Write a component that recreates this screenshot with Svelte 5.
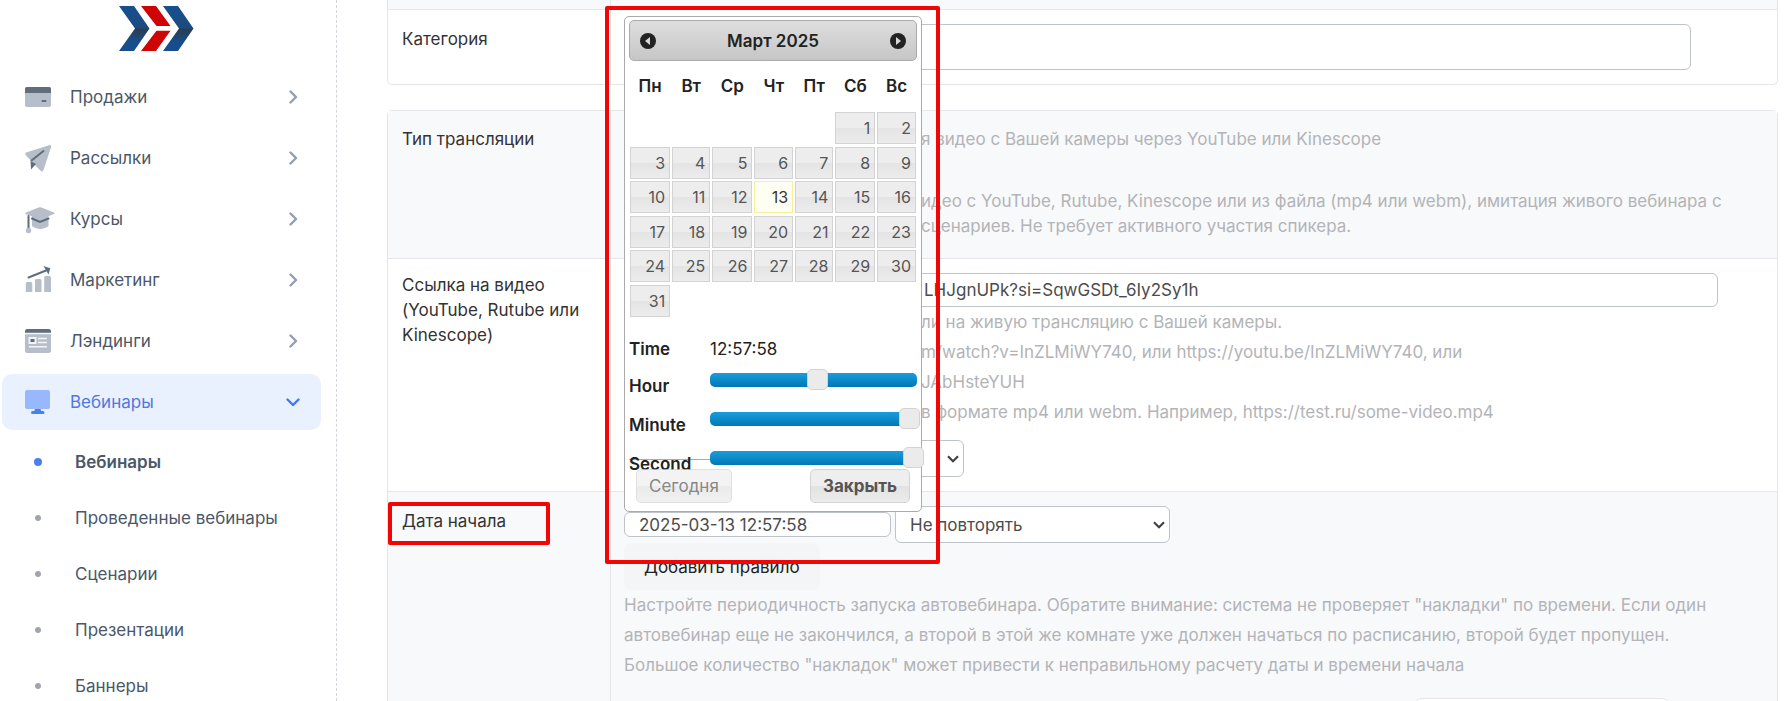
<script>
    let menu = [
        { id: 'sales', title: 'Продажи' },
        { id: 'mail', title: 'Рассылки' },
        { id: 'courses', title: 'Курсы' },
        { id: 'marketing', title: 'Маркетинг' },
        { id: 'landing', title: 'Лэндинги' },
        { id: 'webinars', title: 'Вебинары' }
    ]
    let active = 'webinars'

    let submenu = ['Вебинары', 'Проведенные вебинары', 'Сценарии', 'Презентации', 'Баннеры']
    let activeSub = 'Вебинары'

    const weekdays = ['Пн', 'Вт', 'Ср', 'Чт', 'Пт', 'Сб', 'Вс']
    const today = 13

    // March 2025 starts on saturday
    const weeks = [0, 1, 2, 3, 4, 5].map(w =>
        weekdays.map((_, d) => {
            const day = w * 7 + d - 4
            return day > 0 && day < 32 ? day : null
        })
    )

    let hour = 12
    let minute = 57
    let second = 58

    const pad = (n) => String(n).padStart(2, '0')

    $: time = `${pad(hour)}:${pad(minute)}:${pad(second)}`
    $: startDate = `2025-03-13 ${time}`

    let category = ''
    let link = 'LHJgnUPk?si=SqwGSDt_6Iy2Sy1h'
</script>

<div class="layout">
    <aside class="sidebar">
        <a class="logo" href="#home" aria-label="Главная">
            <svg width="75" height="45" viewBox="0 0 75 45">
                <defs>
                    <linearGradient id="blue" x1="0" y1="0" x2="0" y2="1">
                        <stop offset="0" stop-color="#17508f" />
                        <stop offset=".48" stop-color="#1c4a80" />
                        <stop offset=".52" stop-color="#2b3d52" />
                        <stop offset=".8" stop-color="#174d8c" />
                    </linearGradient>
                </defs>
                <path fill="url(#blue)" d="M0 0h15l15.500 22.500L15 45H0l16-22.500z" />
                <path fill="#cf0404" d="M22 0h15l14.500 20H37.500zM37.500 24.700h14L37 45H22z" />
                <path fill="url(#blue)" d="M44 0h15l15.500 22.500L59 45H44l16-22.500z" />
            </svg>
        </a>

        <nav>
            {#each menu as item}
                <a class="item" class:active={item.id === active} href="#{item.id}">
                    <svg class="icon" width="30" height="30" viewBox="0 0 30 30">
                        {#if item.id === 'sales'}
                            <rect class="light" y="5" width="26" height="20" rx="2" />
                            <path class="dark" d="M2 5h22a2 2 0 0 1 2 2v4H0V7a2 2 0 0 1 2-2z" />
                            <rect class="dark" x="16.500" y="18" width="5" height="2" rx="1" />
                        {:else if item.id === 'mail'}
                            <path class="light" d="M1 9.500L24 2.200q2.500-.5 2 2L18.500 27q-1 2.500-3.200.5L1 12.500q-1.500-1.800 0-3z" />
                            <path class="dark" d="M5.500 18l5.500 3-5 5.500z" />
                            <path class="line" d="M6.500 17.500L18.500 8" />
                        {:else if item.id === 'courses'}
                            <path class="light" d="M7 12h16.500v10q-8 6.500-16.500 0z" />
                            <path class="light" d="M15 3l14 5.500q1.500.8 0 1.600L15 15.500 1 10.200q-1.500-.8 0-1.600z" />
                            <path class="line" d="M7 14.500l8 3.500 8.500-3.500M3.500 12v12" />
                            <circle class="light" cx="3.500" cy="26.500" r="2.700" />
                        {:else if item.id === 'marketing'}
                            <path class="light" d="M.8 27V18.500a1.500 1.500 0 0 1 1.500-1.500h3.500a1.500 1.500 0 0 1 1.500 1.500V27zM10 27V15.500a1.500 1.500 0 0 1 1.500-1.500H15a1.500 1.500 0 0 1 1.500 1.500V27zM19.200 27V12.500a1.500 1.500 0 0 1 1.500-1.500h3.800a1.500 1.500 0 0 1 1.500 1.500V27z" />
                            <path class="line" d="M3.500 12.500L21 5.500" />
                            <path class="dark" d="M18.500 1l6.800 2.200-1.800 6.300z" />
                        {:else if item.id === 'landing'}
                            <rect class="light" y="3" width="26" height="24" rx="2.500" />
                            <path class="dark" d="M2.500 3h21A2.500 2.500 0 0 1 26 5.500V7H0V5.500A2.500 2.500 0 0 1 2.500 3z" />
                            <path class="cut" d="M0 7.500h26M13 12.500h9M13 16.500h9M4 20.800h18" />
                            <rect class="cutbox" x="3.500" y="11" width="8" height="7" />
                            <rect class="dark" x="5.500" y="13" width="4" height="3" />
                        {:else}
                            <rect class="light" y="3" width="25" height="19" rx="2" />
                            <path class="dark" d="M10 22h5.500l.8 2h1.700q1.500 0 1.500 1.500T18 27H7.500Q6 27 6 25.500T7.500 24h1.800z" />
                        {/if}
                    </svg>
                    <span class="title">{item.title}</span>
                    <svg class="arrow" width="14" height="14" viewBox="0 0 14 14">
                        {#if item.id === active}
                            <path d="M1.500 4.500L7 10l5.500-5.500" />
                        {:else}
                            <path d="M4.500 1.500L10 7l-5.500 5.500" />
                        {/if}
                    </svg>
                </a>
            {/each}

            <ul class="submenu">
                {#each submenu as title}
                    <li>
                        <a class="subitem" class:current={title === activeSub} href="#webinars">
                            <span class="bullet"></span>
                            {title}
                        </a>
                    </li>
                {/each}
            </ul>
        </nav>
    </aside>

    <main>
        <section class="panel first">
            <div class="row odd">
                <div class="name"></div>
                <div class="value"></div>
            </div>
            <div class="row">
                <label class="name" for="category">Категория</label>
                <div class="value">
                    <input id="category" class="field category" type="text" bind:value={category}>
                </div>
            </div>
        </section>

        <section class="panel">
            <div class="row odd type">
                <div class="name">Тип трансляции</div>
                <div class="value hint behind">
                    <p>я видео с Вашей камеры через YouTube или Kinescope</p>
                    <p>идео с YouTube, Rutube, Kinescope или из файла (mp4 или webm), имитация живого вебинара с<br>сценариев. Не требует активного участия спикера.</p>
                </div>
            </div>

            <div class="row">
                <label class="name multi" for="link">Ссылка на видео (YouTube, Rutube или Kinescope)</label>
                <div class="value">
                    <input id="link" class="field link" type="text" bind:value={link}>
                    <p class="hint wide shifted">
                        ли на живую трансляцию с Вашей камеры.<br>
                        m/watch?v=InZLMiWY740, или https://youtu.be/InZLMiWY740, или<br>
                        JAbHsteYUH<br>
                        в формате mp4 или webm. Например, https://test.ru/some-video.mp4
                    </p>
                    <select class="field source" aria-label="Источник видео"><option></option></select>
                </div>
            </div>

            <div class="row odd">
                <label class="name" for="start">
                    Дата начала
                    <span class="mark mark-label"></span>
                </label>
                <div class="value">
                    <div class="schedule">
                        <div class="date">
                            <input id="start" class="field" type="text" value={startDate}>

                            <div class="picker">
                                <div class="picker-header">
                                    <button type="button" aria-label="Предыдущий месяц">
                                        <svg width="16" height="16" viewBox="0 0 16 16"><circle cx="8" cy="8" r="8" /><path d="M10 4v8L5 8z" /></svg>
                                    </button>
                                    <span>Март 2025</span>
                                    <button type="button" aria-label="Следующий месяц">
                                        <svg width="16" height="16" viewBox="0 0 16 16"><circle cx="8" cy="8" r="8" /><path d="M6 4v8l5-4z" /></svg>
                                    </button>
                                </div>

                                <table>
                                    <thead>
                                        <tr>
                                            {#each weekdays as name}
                                                <th>{name}</th>
                                            {/each}
                                        </tr>
                                    </thead>
                                    <tbody>
                                        {#each weeks as week}
                                            <tr>
                                                {#each week as day}
                                                    <td>
                                                        {#if day}
                                                            <a class:today={day === today} href="#day{day}">{day}</a>
                                                        {/if}
                                                    </td>
                                                {/each}
                                            </tr>
                                        {/each}
                                    </tbody>
                                </table>

                                <div class="time">
                                    <b>Time</b>
                                    <output>{time}</output>
                                    <label for="hour">Hour</label>
                                    <div class="slider"><input id="hour" type="range" min="0" max="23" bind:value={hour}></div>
                                    <label for="minute">Minute</label>
                                    <div class="slider"><input id="minute" type="range" min="0" max="59" bind:value={minute}></div>
                                    <label for="second">Second</label>
                                    <div class="slider"><input id="second" type="range" min="0" max="59" bind:value={second}></div>
                                </div>

                                <div class="picker-buttons">
                                    <button class="now" type="button">Сегодня</button>
                                    <button class="close" type="button">Закрыть</button>
                                </div>
                            </div>
                            <span class="mark mark-picker"></span>
                        </div>

                        <select class="field repeat" aria-label="Повтор">
                            <option>Не повторять</option>
                        </select>
                    </div>

                    <button class="add" type="button">Добавить правило</button>

                    <p class="hint wide">
                        Настройте периодичность запуска автовебинара. Обратите внимание: система не проверяет "накладки" по времени. Если один автовебинар еще не закончился, а второй в этой же комнате уже должен начаться по расписанию, второй будет пропущен. Большое количество "накладок" может привести к неправильному расчету даты и времени начала
                    </p>
                    <div class="next"></div>
                </div>
            </div>
        </section>
    </main>
</div>

<style>
    :global(body) {
        background: #fff;
        font-family: Inter, "Liberation Sans", sans-serif;
        font-size: 17px;
        color: #333;
    }

    .layout, .layout * {
        box-sizing: border-box;
    }

    .layout {
        display: flex;
        height: 100vh;
        overflow: hidden;
    }

    a {
        text-decoration: none;
        color: inherit;
    }

    p {
        margin: 0;
    }

    button, input, select {
        font-family: inherit;
        font-size: inherit;
    }

    /* SIDEBAR */

    .sidebar {
        flex: 0 0 337px;
        padding: 6px 15px 0 2px;
        border-right: 1px dashed #d3d5dc;
        color: #4b5768;
    }

    .logo {
        display: flex;
        justify-content: center;
        margin: 0 10px 18px 0;
    }

    .item {
        display: flex;
        align-items: center;
        gap: 15px;
        height: 56px;
        margin-bottom: 5px;
        padding: 0 21px 0 23px;
        border-radius: 10px;
    }

    .item.active {
        margin-bottom: 4px;
        background: #eaf1fe;
        color: #5077e3;
    }

    .title {
        flex: 1;
    }

    .light {
        fill: #b6bfc9;
    }

    .dark {
        fill: #5f6d7d;
    }

    .line {
        fill: none;
        stroke: #5f6d7d;
        stroke-width: 2;
        stroke-linecap: round;
    }

    .cut {
        stroke: #f1f3f6;
        stroke-width: 1.5;
    }

    .cutbox {
        fill: #f1f3f6;
    }

    .active .light {
        fill: #97b8fd;
    }

    .active .dark {
        fill: #4c7eee;
    }

    .arrow {
        fill: none;
        stroke: #939db3;
        stroke-width: 2.4;
        stroke-linecap: round;
        stroke-linejoin: round;
    }

    .active .arrow {
        stroke: #4377f2;
    }

    .submenu {
        margin: 0;
        padding: 0;
        list-style: none;
    }

    .subitem {
        display: flex;
        align-items: center;
        gap: 33px;
        height: 56px;
        padding-left: 32px;
    }

    .bullet {
        width: 6px;
        height: 6px;
        margin: 0 1px;
        border-radius: 50%;
        background: #a1a5ad;
    }

    .current {
        font-weight: 600;
    }

    .current .bullet {
        width: 8px;
        height: 8px;
        margin: 0;
        background: #4c7eee;
    }

    /* FORM */

    main {
        flex: 1;
        min-width: 0;
        padding: 0 9px 0 50px;
    }

    .panel {
        margin-bottom: 25px;
        border: 1px solid #e4e6ea;
        border-radius: 5px;
    }

    .first {
        border-top: none;
        border-top-left-radius: 0;
        border-top-right-radius: 0;
    }

    .row {
        display: grid;
        grid-template-columns: 222px 1fr;
        border-top: 1px solid #e4e6ea;
    }

    .row:first-child {
        border-top: none;
    }

    .odd {
        background: #f8f9fb;
    }

    .first .odd {
        height: 9px;
        overflow: hidden;
    }

    .name {
        position: relative;
        padding: 14px;
        line-height: 30px;
    }

    .multi {
        line-height: 25px;
    }

    .value {
        padding: 14px 40px 14px 13px;
        border-left: 1px solid #e4e6ea;
    }

    .hint {
        line-height: 25px;
        color: #b3b4b7;
    }

    .wide {
        line-height: 30px;
    }

    .type .name {
        line-height: 28px;
    }

    .type .value {
        padding: 16px 14px 19px;
    }

    .type .behind {
        padding-left: 310px;
    }

    .type p {
        white-space: nowrap;
    }

    .type p + p {
        margin-top: 37px;
    }

    .shifted {
        padding-left: 297px;
        margin-bottom: 13px;
    }

    .field {
        display: block;
        padding: 0 14px;
        border: 1px solid #bfc3ca;
        border-radius: 6px;
        background: #fff;
        color: #4c4c4c;
    }

    select.field {
        appearance: none;
        height: 37px;
        background: #fff url("data:image/svg+xml,%3Csvg xmlns='http://www.w3.org/2000/svg' width='12' height='8'%3E%3Cpath d='M1 1.200l5 5 5-5' fill='none' stroke='%23444' stroke-width='2.200'/%3E%3C/svg%3E") no-repeat right 4px center;
    }

    .category {
        width: calc(100% - 46px);
        height: 46px;
    }

    .link {
        width: calc(100% - 19px);
        height: 34px;
        padding-left: 299px;
    }

    .source {
        width: 340px;
    }

    .schedule {
        display: flex;
        align-items: center;
        gap: 4px;
    }

    .date {
        position: relative;
    }

    .date .field {
        width: 267px;
        height: 25px;
    }

    .repeat {
        width: 275px;
    }

    .add {
        display: block;
        height: 47px;
        padding: 0 20px;
        border: none;
        border-radius: 8px;
        background: #f4f5f7;
        color: #222;
    }

    .next {
        width: 256px;
        height: 40px;
        margin: 18px 67px 0 auto;
        border: 1px solid #e4e6ea;
        border-radius: 8px;
        background: #fff;
    }

    /* DATE PICKER */

    .picker {
        position: absolute;
        bottom: 100%;
        left: 0;
        z-index: 1;
        width: 298px;
        padding: 3px 4px 0;
        border: 1px solid #aaa;
        border-radius: 5px;
        background: #fff;
        color: #222;
    }

    .picker-header {
        display: flex;
        align-items: center;
        justify-content: space-between;
        height: 41px;
        padding: 0 10px;
        border: 1px solid #aaa;
        border-radius: 5px;
        background: linear-gradient(#dedede, #c6c6c6);
        font-weight: 600;
    }

    .picker-header button {
        display: flex;
        padding: 0;
        border: none;
        background: none;
    }

    .picker-header circle {
        fill: #222;
    }

    .picker-header path {
        fill: #d8d8d8;
    }

    table {
        width: 100%;
        height: 257px;
        border-collapse: collapse;
    }

    th {
        height: 50px;
        padding: 0 5px;
        font-weight: 600;
    }

    td {
        padding: 1px;
    }

    td a {
        display: block;
        height: 32px;
        padding: 0 4px;
        border: 1px solid #d3d3d3;
        background: linear-gradient(#ededed 50%, #e4e4e4 50%, #ececec);
        font-size: 16px;
        line-height: 30px;
        text-align: right;
        color: #555;
    }

    td .today {
        border-color: #f8ef9d;
        background: #fffef2;
        color: #363636;
    }

    .time {
        display: grid;
        grid-template-columns: 81px 1fr;
        grid-template-rows: 30px;
        grid-auto-rows: 39px;
        align-items: center;
        margin-top: 16px;
    }

    .time b, .time label {
        font-weight: 600;
    }

    .time label {
        padding-top: 5px;
    }

    .slider {
        align-self: start;
        height: 14px;
        margin-top: 9px;
        border-radius: 5px;
        background: linear-gradient(#1a9cdc, #0078b6);
    }

    .slider input {
        display: block;
        width: calc(100% + 20px);
        height: 21px;
        margin: -4px -10px;
        appearance: none;
        background: none;
    }

    .slider input::-webkit-slider-thumb {
        appearance: none;
        width: 21px;
        height: 21px;
        border: 1px solid #d3d3d3;
        border-radius: 5px;
        background: #ebebeb;
    }

    .picker-buttons {
        display: flex;
        justify-content: space-between;
        margin-top: -22px;
        padding: 9px 7px 8px;
        border-top: 1px solid #aaa;
    }

    .picker-buttons button {
        height: 34px;
        padding: 0 12px;
        border: 1px solid #d3d3d3;
        border-radius: 5px;
        background: linear-gradient(#eee 50%, #e2e2e2 50%, #ececec);
        color: #555;
    }

    .picker-buttons .close {
        font-weight: 700;
    }

    .picker-buttons .now {
        opacity: .7;
    }

    /* HIGHLIGHT FRAMES */

    .mark {
        position: absolute;
        z-index: 2;
        border: 4px solid #f20505;
        border-radius: 2px;
        pointer-events: none;
    }

    .mark-label {
        top: 10px;
        left: 0;
        width: 162px;
        height: 43px;
    }

    .mark-picker {
        bottom: -27px;
        left: -19px;
        width: 335px;
        height: 558px;
    }
</style>
